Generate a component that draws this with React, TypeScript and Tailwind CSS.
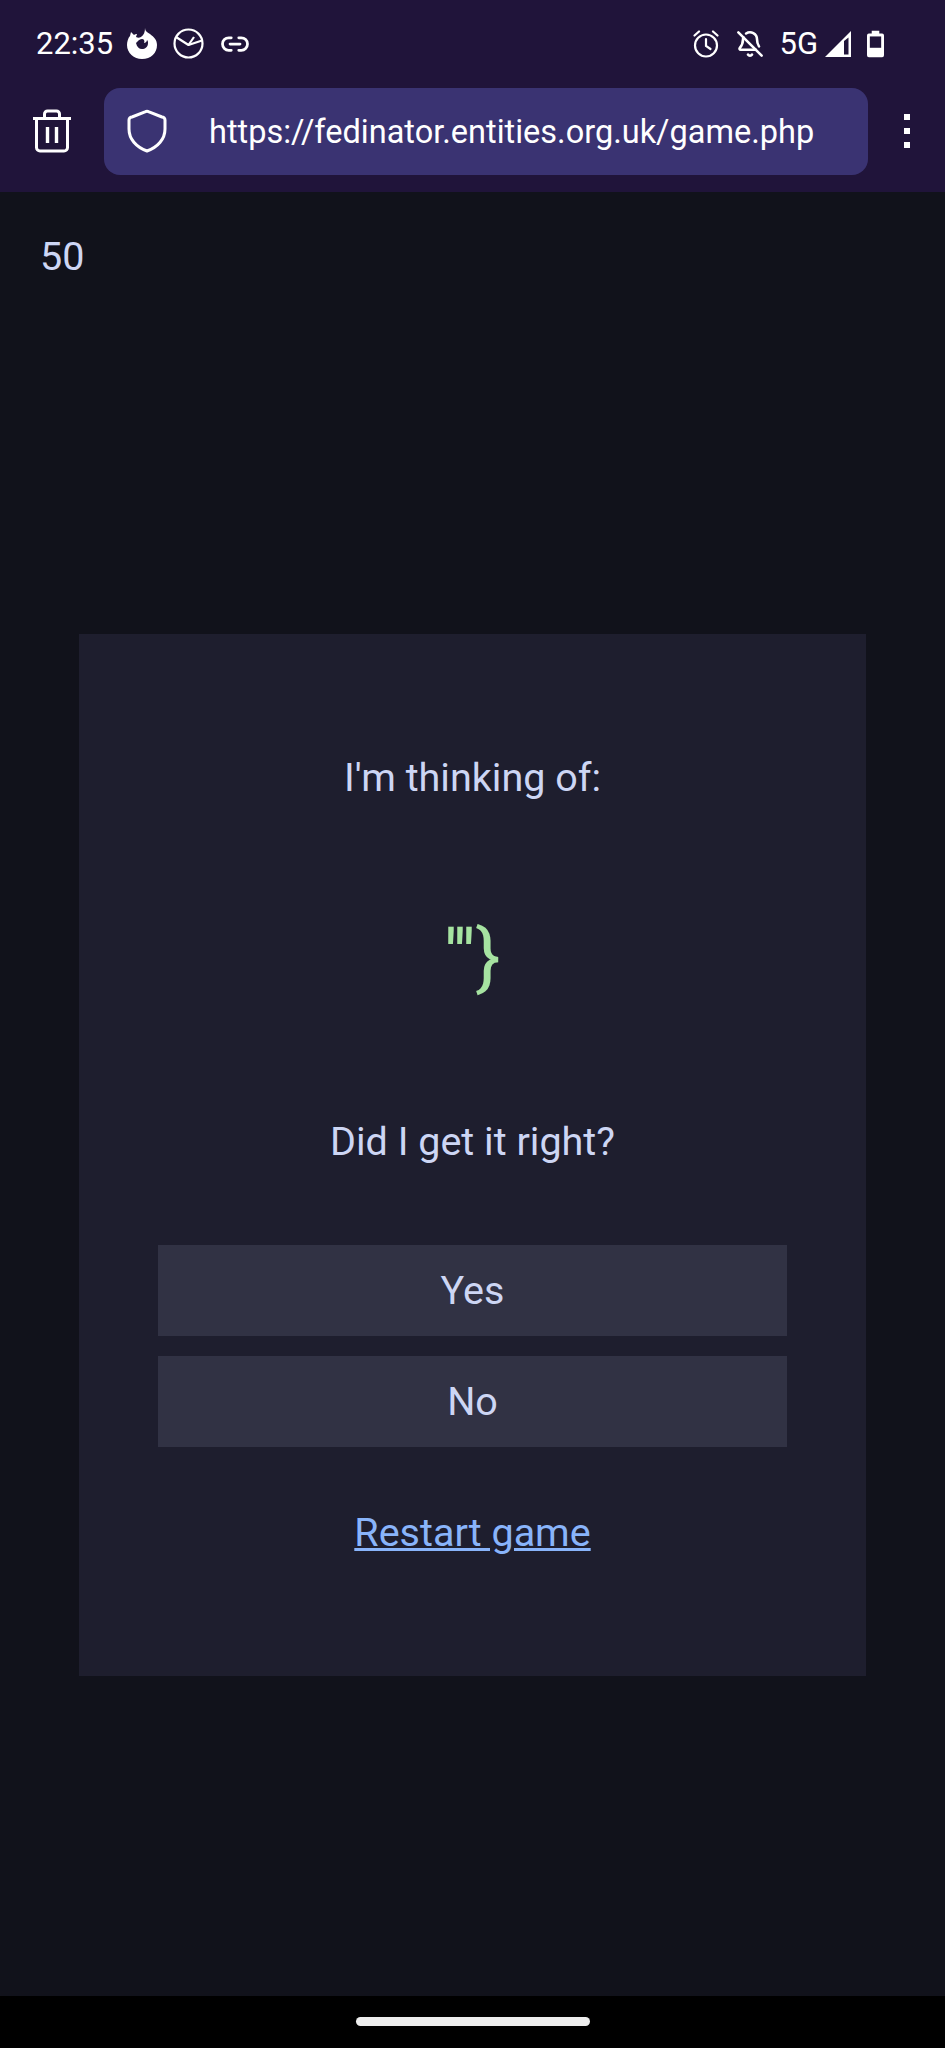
import { Link2, BellOff } from 'lucide-react';

function FirefoxIcon() {
  return (
    <svg width="32" height="32" viewBox="0 0 32 32" fill="white">
      <path fillRule="evenodd" d="M19 0c0 3 2 4 5 6 4 3 7 6 7 11 0 8-6 14-15 14C8 31 1 25 1 17c0-3 1-7 3-9l1-4 3 3c1-1 2-1 3-1l-1 3c2 1 3 1 5 0 3-2 4-5 4-9Zm-3 11c-2 0-3 1-4 2l-2 2c1 4 3 6 6 6 3 0 6-2 6-6 0-1 0-2-1-3 0 2-2 3-3 3 1-2 0-4-2-4Z" />
    </svg>
  );
}

function MailClockIcon() {
  return (
    <svg width="31" height="31" viewBox="0 0 31 31" fill="none" stroke="white" strokeWidth="2.2" strokeLinejoin="round">
      <circle cx="15.5" cy="15.5" r="14" />
      <path d="M3 9 15.5 17 29 12.500" />
      <path d="M15.500 17 21 9" />
    </svg>
  );
}

function AlarmIcon() {
  return (
    <svg width="26" height="28" viewBox="0 0 26 28" fill="none" stroke="white" strokeWidth="2.2" strokeLinecap="round">
      <circle cx="13" cy="15.5" r="11" />
      <path d="M13 9v7l4.5 3" />
      <path d="M1.5 5.5 6 1.5M24.500 5.500 20 1.500" />
    </svg>
  );
}

function TrashIcon() {
  return (
    <svg width="40" height="44" viewBox="0 0 40 44" fill="none" stroke="white" strokeWidth="3" strokeLinejoin="round">
      <path d="M1 9.500h38" />
      <path d="M4.500 9.500v29a3.500 3.500 0 0 0 3.500 3.500h24a3.500 3.500 0 0 0 3.500-3.500v-29" />
      <path d="M12.500 9.500V5a3 3 0 0 1 3-3h9a3 3 0 0 1 3 3v4.500" />
      <path d="M15.500 18v16M24.500 18v16" strokeWidth="3.400" />
    </svg>
  );
}

function ShieldIcon() {
  return (
    <svg width="40" height="44" viewBox="0 0 40 44" fill="none" stroke="white" strokeWidth="3" strokeLinejoin="round">
      <path d="M18 2.800a5 5 0 0 1 4 0l13 5.200a3 3 0 0 1 3 3v9c0 10-7 18-18 22C9 38 2 30 2 20v-9a3 3 0 0 1 3-3l13-5.200Z" />
    </svg>
  );
}

function SignalIcon() {
  return (
    <svg width="28" height="28" viewBox="0 0 28 28" fill="none">
      <path d="M1 27 27 1v26H1Z" fill="white" />
      <path d="M20 11v13.500h4.500V7.500L20 11Z" fill="#20143a" />
    </svg>
  );
}

function BatteryIcon() {
  return (
    <svg width="17" height="28" viewBox="0 0 18 28" fill="none">
      <path d="M5 0h8v3h3a2 2 0 0 1 2 2v21a2 2 0 0 1-2 2H2a2 2 0 0 1-2-2V5a2 2 0 0 1 2-2h3V0Z" fill="white" />
      <rect x="3" y="6" width="12" height="12" fill="#20143a" />
    </svg>
  );
}

export default function App() {
  return (
    <div className="flex flex-col h-[2048px] w-[945px] overflow-hidden bg-[#11121b] font-['Roboto',sans-serif]">
      {/* status bar + browser toolbar */}
      <div className="h-[192px] shrink-0 bg-[#20143a] text-white">
        <div className="flex items-center justify-between h-[87px] pl-[36px] pr-[61px]">
          <div className="flex items-center">
            <span className="text-[31px] leading-none">22:35</span>
            <span className="ml-[13px]"><FirefoxIcon /></span>
            <span className="ml-[15px]"><MailClockIcon /></span>
            <Link2 className="ml-[16px]" size={30} strokeWidth={2.2} />
          </div>
          <div className="flex items-center">
            <AlarmIcon />
            <BellOff className="ml-[17px]" size={28} strokeWidth={2.2} />
            <span className="ml-[15px] text-[31px] leading-none">5G</span>
            <span className="ml-[6px]"><SignalIcon /></span>
            <span className="ml-[15px]"><BatteryIcon /></span>
          </div>
        </div>
        <div className="flex items-center h-[88px]">
          <div className="w-[104px] flex justify-center">
            <TrashIcon />
          </div>
          <div className="flex items-center w-[764px] h-[87px] rounded-[16px] bg-[#3a3372] pl-[23px]">
            <ShieldIcon />
            <span className="ml-[42px] pt-[3px] text-[32.5px] leading-none whitespace-nowrap">https://fedinator.entities.org.uk/game.php</span>
          </div>
          <div className="flex-1 flex flex-col items-center gap-[8px]">
            <span className="w-[6px] h-[6px] bg-white" />
            <span className="w-[6px] h-[6px] bg-white" />
            <span className="w-[6px] h-[6px] bg-white" />
          </div>
        </div>
      </div>

      {/* page */}
      <main className="flex-1 text-[#cdd6f4]">
        <p className="pl-[40px] pt-[41px] text-[39.5px] leading-[47px]">50</p>
        <div className="mx-[79px] mt-[354px] h-[1042px] bg-[#1e1e2e] px-[79px] pt-[120px] text-center text-[39.5px]">
          <p className="leading-[47px]">I'm thinking of:</p>
          <p className="mt-[112px] h-[88px] text-[74px] leading-[88px] text-[#a6e3a1]">'''{'}'}</p>
          <p className="mt-[117px] leading-[47px]">Did I get it right?</p>
          <button className="mt-[80px] block w-full h-[91px] bg-[#313244]">Yes</button>
          <button className="mt-[20px] block w-full h-[91px] bg-[#313244]">No</button>
          <a className="inline-block mt-[62px] leading-[47px] text-[#89b4fa] underline">Restart game</a>
        </div>
      </main>

      {/* gesture bar */}
      <div className="h-[52px] shrink-0 bg-black pt-[21px]">
        <div className="mx-auto w-[234px] h-[9px] rounded-full bg-[#eeeeee]" />
      </div>
    </div>
  );
}
